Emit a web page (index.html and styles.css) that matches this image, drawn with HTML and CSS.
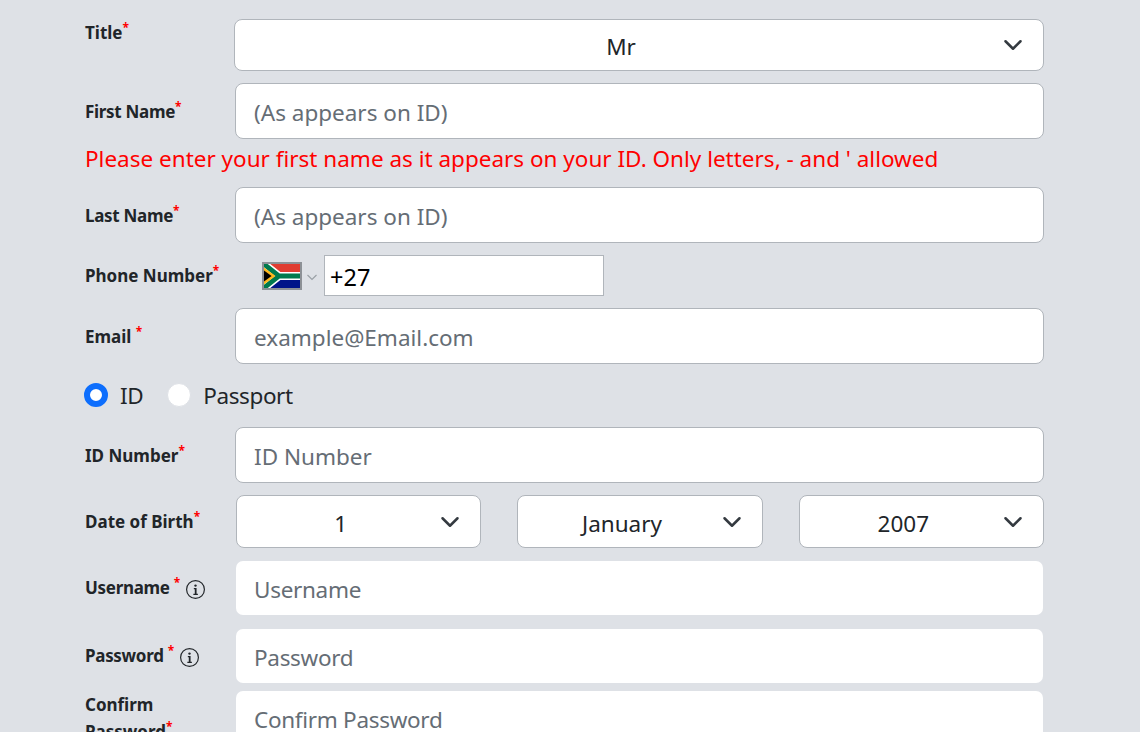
FILE: index.html
```html
<!DOCTYPE html>
<html lang="en">
<head>
  <meta charset="UTF-8">
  <meta name="viewport" content="width=device-width, initial-scale=1.0">
  <title>Register</title>
  <link rel="stylesheet" href="styles.css">
</head>
<body>
  <form class="signup-form">
    <div class="form-row title-row">
      <label class="form-label" for="title">Title<sup class="req">*</sup></label>
      <select class="form-select" id="title"><option>Mr</option></select>
    </div>

    <div class="form-row">
      <label class="form-label tight" for="firstName">First Name<sup class="req">*</sup></label>
      <input class="form-input" type="text" id="firstName" placeholder="(As appears on ID)">
    </div>
    <p class="form-error">Please enter your first name as it appears on your ID. Only letters, - and ' allowed</p>

    <div class="form-row">
      <label class="form-label tight" for="lastName">Last Name<sup class="req">*</sup></label>
      <input class="form-input" type="text" id="lastName" placeholder="(As appears on ID)">
    </div>

    <div class="form-row">
      <label class="form-label" for="phone">Phone Number<sup class="req">*</sup></label>
      <div class="phone-field">
        <button class="flag-button" type="button">
          <svg class="flag" viewBox="0 0 36 24" preserveAspectRatio="none">
            <rect width="36" height="12" fill="#e03c31"/>
            <rect y="12" width="36" height="12" fill="#001489"/>
            <path d="M-2 -1.5L15 12L-2 25.5M15 12H36" fill="none" stroke="#fff" stroke-width="8"/>
            <path d="M-2 -1.5L15 12L-2 25.5M15 12H36" fill="none" stroke="#007a4d" stroke-width="4.8"/>
            <path d="M0 3.6L11.5 12L0 20.4Z" fill="#ffb81c"/>
            <path d="M0 6.4L7.6 12L0 17.6Z" fill="#000"/>
          </svg>
          <svg class="flag-caret" viewBox="0 0 12 12"><path d="M1.5 4L6 8.5L10.5 4" fill="none" stroke="#9aa0a6" stroke-width="1.2"/></svg>
        </button>
        <input class="phone-input" type="tel" id="phone" value="+27">
      </div>
    </div>

    <div class="form-row">
      <label class="form-label" for="email">Email <sup class="req">*</sup></label>
      <input class="form-input" type="email" id="email" placeholder="example@Email.com">
    </div>

    <div class="id-type">
      <label class="radio-option"><input type="radio" name="idType" checked> ID</label>
      <label class="radio-option"><input type="radio" name="idType"> Passport</label>
    </div>

    <div class="form-row">
      <label class="form-label" for="idNumber">ID Number<sup class="req">*</sup></label>
      <input class="form-input" type="text" id="idNumber" placeholder="ID Number">
    </div>

    <div class="form-row">
      <label class="form-label" for="day">Date of Birth<sup class="req">*</sup></label>
      <div class="dob-fields">
        <select class="form-select" id="day"><option>1</option></select>
        <select class="form-select" id="month"><option>January</option></select>
        <select class="form-select" id="year"><option>2007</option></select>
      </div>
    </div>

    <div class="form-row">
      <label class="form-label tight with-info" for="username">Username <sup class="req">*</sup>
        <svg class="info-icon" viewBox="0 0 16 16"><path d="M8 15A7 7 0 1 1 8 1a7 7 0 0 1 0 14zm0 1A8 8 0 1 0 8 0a8 8 0 0 0 0 16z"/><circle cx="8" cy="4.7" r="1"/><path d="M6.6 6.8H8.9V11.6H10V12.6H6.2V11.6H7.4V7.8H6.6Z"/></svg>
      </label>
      <input class="form-input borderless" type="text" id="username" placeholder="Username">
    </div>

    <div class="form-row password-row">
      <label class="form-label tight with-info" for="password">Password <sup class="req">*</sup>
        <svg class="info-icon" viewBox="0 0 16 16"><path d="M8 15A7 7 0 1 1 8 1a7 7 0 0 1 0 14zm0 1A8 8 0 1 0 8 0a8 8 0 0 0 0 16z"/><circle cx="8" cy="4.7" r="1"/><path d="M6.6 6.8H8.9V11.6H10V12.6H6.2V11.6H7.4V7.8H6.6Z"/></svg>
      </label>
      <input class="form-input borderless" type="password" id="password" placeholder="Password">
    </div>

    <div class="form-row">
      <label class="form-label" for="confirmPassword">Confirm Password<sup class="req">*</sup></label>
      <input class="form-input borderless" type="password" id="confirmPassword" placeholder="Confirm Password">
    </div>
  </form>
</body>
</html>
```

FILE: styles.css
```css
html, body {
  height: 100%;
  overflow: hidden;
}

body {
  margin: 0;
  background-color: #dee1e6;
  color: #212529;
  font-family: "Noto Sans", "Open Sans", sans-serif;
}

.signup-form {
  width: 959px;
  margin-left: 85px;
  padding-top: 19px;
}

.form-row {
  display: flex;
  align-items: center;
  margin-bottom: 12px;
}

.title-row {
  align-items: flex-start;
}

.title-row .form-label {
  width: 149px;
}

.password-row {
  margin-bottom: 6px;
}

.form-label {
  flex: none;
  width: 150px;
  font-size: 17px;
  font-weight: 700;
  line-height: 27px;
}

.tight {
  letter-spacing: -0.3px;
}

.with-info {
  margin-bottom: 2px;
}

.req {
  color: #f00;
  font-size: 12px;
  font-weight: 700;
  line-height: 0;
}

.info-icon {
  width: 19px;
  height: 19px;
  margin-left: 2px;
  fill: #212529;
  vertical-align: -5px;
}

.form-input,
.form-select {
  box-sizing: border-box;
  flex: 1;
  min-width: 0;
  border: 1px solid #b0b5bb;
  border-radius: 8px;
  background-color: #fff;
  color: #212529;
  font-family: inherit;
  font-size: 22.5px;
}

.form-input {
  height: 56px;
  padding: 2px 18px 0;
}

.form-input::placeholder {
  color: #656d75;
  opacity: 1;
}

.borderless {
  border-color: transparent;
  background-clip: padding-box;
  letter-spacing: -0.3px;
}

.form-select {
  height: 52px;
  padding: 2px 36px 0 0;
  appearance: none;
  text-align: center;
  text-align-last: center;
  background-image: url("data:image/svg+xml,%3csvg xmlns='http://www.w3.org/2000/svg' viewBox='0 0 16 16'%3e%3cpath fill='none' stroke='%23343a40' stroke-linecap='round' stroke-linejoin='round' stroke-width='2' d='M2 5l6 6 6-6'/%3e%3c/svg%3e");
  background-repeat: no-repeat;
  background-position: right 20px center;
  background-size: 20px 20px;
}

.form-error {
  height: 48px;
  margin: -12px 0 0;
  color: #f00;
  font-size: 22.5px;
  line-height: 40px;
}

.phone-field {
  display: flex;
  align-items: center;
  margin-left: 27px;
}

.flag-button {
  display: flex;
  align-items: center;
  padding: 0;
  border: none;
  background: none;
}

.flag {
  box-sizing: border-box;
  width: 40px;
  height: 28px;
  border: 2px solid #8d9196;
}

.flag-caret {
  width: 12px;
  height: 12px;
  margin: 2px 6px 0 4px;
}

.phone-input {
  box-sizing: border-box;
  width: 280px;
  height: 41px;
  padding: 2px 5px 0;
  border: 1px solid #b0b5bb;
  background-color: #fff;
  color: #000;
  font-family: inherit;
  font-size: 23.5px;
}

.id-type {
  display: flex;
  align-items: center;
  gap: 24px;
  height: 38px;
  margin: 0 0 13px -1px;
  font-size: 22.5px;
  letter-spacing: -0.4px;
}

.radio-option {
  display: flex;
  align-items: center;
  gap: 12px;
}

.radio-option input {
  box-sizing: border-box;
  width: 24px;
  height: 24px;
  margin: 0;
  appearance: none;
  border: 1px solid #dee1e6;
  border-radius: 50%;
  background-color: #fff;
}

.radio-option input:checked {
  border: 6px solid #0d6efd;
}

.dob-fields {
  display: flex;
  flex: 1;
  gap: 36px;
  margin-left: 1px;
}

.dob-fields .form-select {
  height: 53px;
  padding-top: 3px;
}
```
